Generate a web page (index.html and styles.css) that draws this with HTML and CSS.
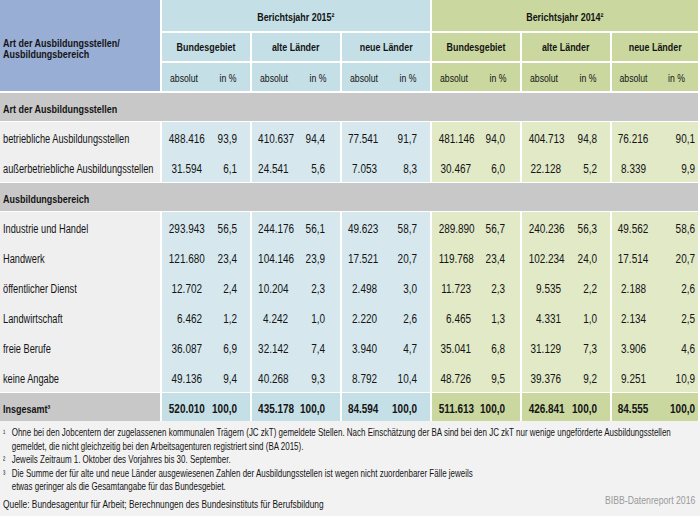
FILE: index.html
```html
<!DOCTYPE html>
<html lang="de">
<head>
<meta charset="utf-8">
<title>Ausbildungsstellen</title>
<link rel="stylesheet" href="styles.css">
</head>
<body>
<div class="table">
  <div class="grid head">
    <div class="corner"><span class="cx">Art der Ausbildungsstellen/<br>Ausbildungsbereich</span></div>
    <div class="yr h15 span3"><span class="cx">Berichtsjahr 2015²</span></div>
    <div class="yr h14 span3"><span class="cx">Berichtsjahr 2014²</span></div>
    <div class="reg h15"><span class="cx">Bundesgebiet</span></div>
    <div class="reg h15"><span class="cx">alte Länder</span></div>
    <div class="reg h15"><span class="cx">neue Länder</span></div>
    <div class="reg h14"><span class="cx">Bundesgebiet</span></div>
    <div class="reg h14"><span class="cx">alte Länder</span></div>
    <div class="reg h14"><span class="cx">neue Länder</span></div>
    <div class="unit h15"><span>absolut</span><span>in %</span></div>
    <div class="unit h15"><span>absolut</span><span>in %</span></div>
    <div class="unit h15"><span>absolut</span><span>in %</span></div>
    <div class="unit h14"><span>absolut</span><span>in %</span></div>
    <div class="unit h14"><span>absolut</span><span>in %</span></div>
    <div class="unit h14"><span>absolut</span><span>in %</span></div>
  </div>

  <div class="section"><span class="cx">Art der Ausbildungsstellen</span></div>
  <div class="grid body">
    <div class="lbl"><span class="cx">betriebliche Ausbildungsstellen</span></div>
    <div class="v v15 c1"><span class="abs">488.416</span><span class="pct">93,9</span></div>
    <div class="v v15 c2"><span class="abs">410.637</span><span class="pct">94,4</span></div>
    <div class="v v15 c3"><span class="abs">77.541</span><span class="pct">91,7</span></div>
    <div class="v v14 c4"><span class="abs">481.146</span><span class="pct">94,0</span></div>
    <div class="v v14 c5"><span class="abs">404.713</span><span class="pct">94,8</span></div>
    <div class="v v14 c6"><span class="abs">76.216</span><span class="pct">90,1</span></div>

    <div class="lbl"><span class="cx">außerbetriebliche Ausbildungsstellen</span></div>
    <div class="v v15 c1"><span class="abs">31.594</span><span class="pct">6,1</span></div>
    <div class="v v15 c2"><span class="abs">24.541</span><span class="pct">5,6</span></div>
    <div class="v v15 c3"><span class="abs">7.053</span><span class="pct">8,3</span></div>
    <div class="v v14 c4"><span class="abs">30.467</span><span class="pct">6,0</span></div>
    <div class="v v14 c5"><span class="abs">22.128</span><span class="pct">5,2</span></div>
    <div class="v v14 c6"><span class="abs">8.339</span><span class="pct">9,9</span></div>
  </div>

  <div class="section"><span class="cx">Ausbildungsbereich</span></div>
  <div class="grid body">
    <div class="lbl"><span class="cx">Industrie und Handel</span></div>
    <div class="v v15 c1"><span class="abs">293.943</span><span class="pct">56,5</span></div>
    <div class="v v15 c2"><span class="abs">244.176</span><span class="pct">56,1</span></div>
    <div class="v v15 c3"><span class="abs">49.623</span><span class="pct">58,7</span></div>
    <div class="v v14 c4"><span class="abs">289.890</span><span class="pct">56,7</span></div>
    <div class="v v14 c5"><span class="abs">240.236</span><span class="pct">56,3</span></div>
    <div class="v v14 c6"><span class="abs">49.562</span><span class="pct">58,6</span></div>

    <div class="lbl"><span class="cx">Handwerk</span></div>
    <div class="v v15 c1"><span class="abs">121.680</span><span class="pct">23,4</span></div>
    <div class="v v15 c2"><span class="abs">104.146</span><span class="pct">23,9</span></div>
    <div class="v v15 c3"><span class="abs">17.521</span><span class="pct">20,7</span></div>
    <div class="v v14 c4"><span class="abs">119.768</span><span class="pct">23,4</span></div>
    <div class="v v14 c5"><span class="abs">102.234</span><span class="pct">24,0</span></div>
    <div class="v v14 c6"><span class="abs">17.514</span><span class="pct">20,7</span></div>

    <div class="lbl"><span class="cx">öffentlicher Dienst</span></div>
    <div class="v v15 c1"><span class="abs">12.702</span><span class="pct">2,4</span></div>
    <div class="v v15 c2"><span class="abs">10.204</span><span class="pct">2,3</span></div>
    <div class="v v15 c3"><span class="abs">2.498</span><span class="pct">3,0</span></div>
    <div class="v v14 c4"><span class="abs">11.723</span><span class="pct">2,3</span></div>
    <div class="v v14 c5"><span class="abs">9.535</span><span class="pct">2,2</span></div>
    <div class="v v14 c6"><span class="abs">2.188</span><span class="pct">2,6</span></div>

    <div class="lbl"><span class="cx">Landwirtschaft</span></div>
    <div class="v v15 c1"><span class="abs">6.462</span><span class="pct">1,2</span></div>
    <div class="v v15 c2"><span class="abs">4.242</span><span class="pct">1,0</span></div>
    <div class="v v15 c3"><span class="abs">2.220</span><span class="pct">2,6</span></div>
    <div class="v v14 c4"><span class="abs">6.465</span><span class="pct">1,3</span></div>
    <div class="v v14 c5"><span class="abs">4.331</span><span class="pct">1,0</span></div>
    <div class="v v14 c6"><span class="abs">2.134</span><span class="pct">2,5</span></div>

    <div class="lbl"><span class="cx">freie Berufe</span></div>
    <div class="v v15 c1"><span class="abs">36.087</span><span class="pct">6,9</span></div>
    <div class="v v15 c2"><span class="abs">32.142</span><span class="pct">7,4</span></div>
    <div class="v v15 c3"><span class="abs">3.940</span><span class="pct">4,7</span></div>
    <div class="v v14 c4"><span class="abs">35.041</span><span class="pct">6,8</span></div>
    <div class="v v14 c5"><span class="abs">31.129</span><span class="pct">7,3</span></div>
    <div class="v v14 c6"><span class="abs">3.906</span><span class="pct">4,6</span></div>

    <div class="lbl"><span class="cx">keine Angabe</span></div>
    <div class="v v15 c1"><span class="abs">49.136</span><span class="pct">9,4</span></div>
    <div class="v v15 c2"><span class="abs">40.268</span><span class="pct">9,3</span></div>
    <div class="v v15 c3"><span class="abs">8.792</span><span class="pct">10,4</span></div>
    <div class="v v14 c4"><span class="abs">48.726</span><span class="pct">9,5</span></div>
    <div class="v v14 c5"><span class="abs">39.376</span><span class="pct">9,2</span></div>
    <div class="v v14 c6"><span class="abs">9.251</span><span class="pct">10,9</span></div>
  </div>

  <div class="grid total">
    <div class="lbl"><span class="cx">Insgesamt³</span></div>
    <div class="v h15 c1"><span class="abs">520.010</span><span class="pct">100,0</span></div>
    <div class="v h15 c2"><span class="abs">435.178</span><span class="pct">100,0</span></div>
    <div class="v h15 c3"><span class="abs">84.594</span><span class="pct">100,0</span></div>
    <div class="v h14 c4"><span class="abs">511.613</span><span class="pct">100,0</span></div>
    <div class="v h14 c5"><span class="abs">426.841</span><span class="pct">100,0</span></div>
    <div class="v h14 c6"><span class="abs">84.555</span><span class="pct">100,0</span></div>
  </div>
</div>

<div class="notes">
  <div class="fn"><span class="n">¹</span><span class="t">Ohne bei den Jobcentern der zugelassenen kommunalen Trägern (JC zkT) gemeldete Stellen. Nach Einschätzung der BA sind bei den JC zkT nur wenige ungeförderte Ausbildungsstellen<br>gemeldet, die nicht gleichzeitig bei den Arbeitsagenturen registriert sind (BA 2015).</span></div>
  <div class="fn"><span class="n">²</span><span class="t">Jeweils Zeitraum 1. Oktober des Vorjahres bis 30. September.</span></div>
  <div class="fn"><span class="n">³</span><span class="t">Die Summe der für alte und neue Länder ausgewiesenen Zahlen der Ausbildungsstellen ist wegen nicht zuordenbarer Fälle jeweils<br>etwas geringer als die Gesamtangabe für das Bundesgebiet.</span></div>
  <div class="src">
    <span class="quelle">Quelle: Bundesagentur für Arbeit; Berechnungen des Bundesinstituts für Berufsbildung</span>
    <span class="bibb">BIBB-Datenreport 2016</span>
  </div>
</div>
</body>
</html>
```

FILE: styles.css
```css
* { box-sizing: border-box; }
html, body { margin: 0; padding: 0; }
body {
  width: 700px;
  height: 516px;
  overflow: hidden;
  background: #f2f2f2;
  color: #141414;
  font-family: "Liberation Sans", Arial, sans-serif;
}

/* condensed text: the source typeface is narrow, so glyphs are squeezed */
.cx {
  display: inline-block;
  white-space: nowrap;
  transform-origin: left center;
  transform: scaleX(0.77);
}

.table {
  width: 700px;
  padding-right: 2px;
  display: flex;
  flex-direction: column;
  gap: 1px;
  background: #fff;
}

.grid {
  display: grid;
  grid-template-columns: 160px repeat(5, 88px) 86px;
  column-gap: 2px;
}

.head {
  grid-template-rows: 31px 28px 28px;
  row-gap: 2px;
  margin-bottom: 1px;
}

.corner {
  grid-row: 1 / 4;
  background: #99aed5;
  font-weight: bold;
  font-size: 11.5px;
  line-height: 11px;
  display: flex;
  align-items: center;
  padding: 6px 0 0 3px;
}
.corner .cx { transform: scaleX(0.78); }

.span3 { grid-column: span 3; }
.h15 { background: #c5dfe6; }
.h14 { background: #cad8a0; }

.yr, .reg {
  display: flex;
  align-items: center;
  justify-content: center;
  font-weight: bold;
  font-size: 11.5px;
}
.yr { padding-top: 2px; }
.yr .cx, .reg .cx { transform-origin: center center; transform: scaleX(0.775); }

.unit {
  display: flex;
  font-size: 11.5px;
  padding-top: 1px;
}
.unit span {
  flex: 1;
  display: flex;
  align-items: center;
  justify-content: center;
  white-space: nowrap;
  transform: scaleX(0.755);
}

.section {
  height: 28px;
  background: #c8c8c8;
  font-weight: bold;
  font-size: 11.5px;
  display: flex;
  align-items: center;
  padding: 3px 0 0 3px;
}
.section .cx { transform: scaleX(0.78); }

.body { grid-auto-rows: 30px; }

.lbl {
  background: #efefef;
  font-size: 12px;
  display: flex;
  align-items: center;
  padding: 3px 0 0 3px;
  white-space: nowrap;
}

.v {
  display: flex;
  align-items: center;
  font-size: 12px;
  padding-top: 3px;
}
.v15 { background: #d6e8ee; }
.v14 { background: #e1e9c7; }

.abs, .pct {
  text-align: right;
  white-space: nowrap;
  transform-origin: right center;
  transform: scaleX(0.83);
}

.c1 .abs { width: 40px; } .c1 .pct { width: 35px; }
.c2 .abs { width: 36px; } .c2 .pct { width: 37px; }
.c3 .abs { width: 35px; } .c3 .pct { width: 40px; }
.c4 .abs { width: 39px; } .c4 .pct { width: 34px; }
.c5 .abs { width: 39px; } .c5 .pct { width: 36px; }
.c6 .abs { width: 34px; } .c6 .pct { width: 49px; }

.total { grid-auto-rows: 28px; font-weight: bold; }
.total .lbl { background: #c8c8c8; font-size: 11.5px; }
.total .lbl .cx { transform: scaleX(0.78); }

.notes {
  background: #f2f2f2;
  padding: 5px 3px 0 3px;
  font-size: 11px;
  line-height: 13.5px;
  color: #141414;
}
.fn {
  display: flex;
  white-space: nowrap;
  transform-origin: left top;
  transform: scaleX(0.725);
}
.fn .n { width: 12px; flex-shrink: 0; font-size: 9.5px; }

.src {
  display: flex;
  justify-content: space-between;
  align-items: flex-start;
  line-height: 13px;
  padding-right: 2px;
}
.quelle {
  padding-top: 4px;
  white-space: nowrap;
  transform-origin: left center;
  transform: scaleX(0.76);
}
.bibb {
  color: #999;
  white-space: nowrap;
  transform-origin: right center;
  transform: scaleX(0.79);
}
```
